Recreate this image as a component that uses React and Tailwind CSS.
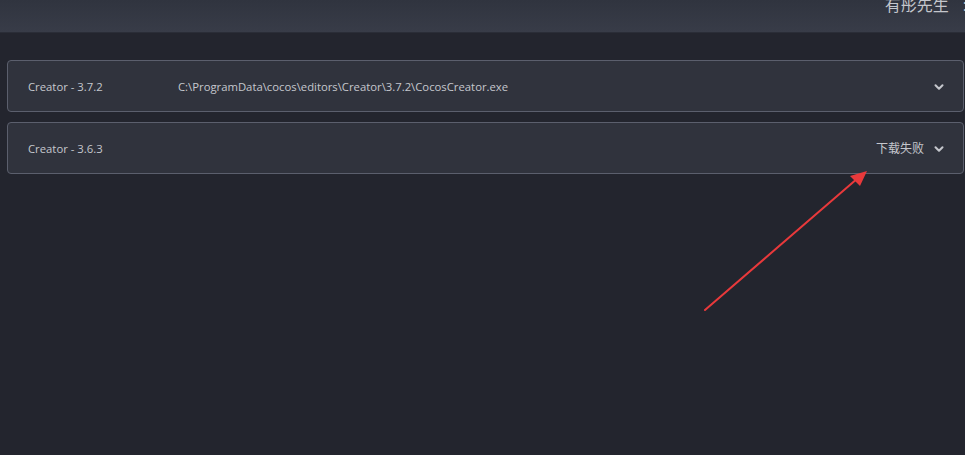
import { ChevronDown } from 'lucide-react';

const versions = [
  { name: 'Creator - 3.7.2', path: 'C:\\ProgramData\\cocos\\editors\\Creator\\3.7.2\\CocosCreator.exe' },
  { name: 'Creator - 3.6.3', status: '下载失败' },
];

function VersionRow({ name, path, status }) {
  return (
    <div className="flex h-[52px] items-center rounded-[4px] border border-[#5b5f6d] bg-[#30333d] pl-5 pr-[17px] pt-[2px]">
      <span className="w-[150px] text-[11.3px] text-[#c5c7cd]">{name}</span>
      {path && <span className="text-[11.3px] text-[#c5c7cd]">{path}</span>}
      <div className="ml-auto flex items-center gap-[8px]">
        {status && <span className="text-[12px] text-[#c5c7cd]">{status}</span>}
        <ChevronDown size={14} strokeWidth={3.5} className="text-[#c5c7cd]" />
      </div>
    </div>
  );
}

export default function App() {
  return (
    <div
      className="relative h-[455px] w-[965px] overflow-hidden bg-[#23252e]"
      style={{ fontFamily: '"Open Sans", "Noto Sans CJK SC", sans-serif' }}
    >
      {/* Header */}
      <div className="flex h-[33px] items-start justify-end overflow-hidden bg-gradient-to-b from-[#30343f] to-[#383c48] border-b border-[#2a2d37]">
        <span className="-mt-[7px] text-[16px] leading-[24px] text-[#c4c6cc]">有彤先生</span>
        <span className="-mt-[7px] ml-[14px] -mr-[2px] text-[16px] leading-[24px] text-[#c4c6cc]">:</span>
      </div>

      {/* Version list */}
      <div className="flex flex-col gap-[10px] pl-[7px] pr-[1px] pt-[27px]">
        {versions.map((v) => (
          <VersionRow key={v.name} {...v} />
        ))}
      </div>

      {/* Annotation arrow */}
      <svg className="absolute left-0 top-0" width="965" height="455" viewBox="0 0 965 455">
        <line x1="705" y1="310" x2="858" y2="178" stroke="#e8393b" strokeWidth="2" strokeLinecap="round" />
        <polygon points="867,171 850,176 860,186" fill="#e8393b" />
      </svg>
    </div>
  );
}
